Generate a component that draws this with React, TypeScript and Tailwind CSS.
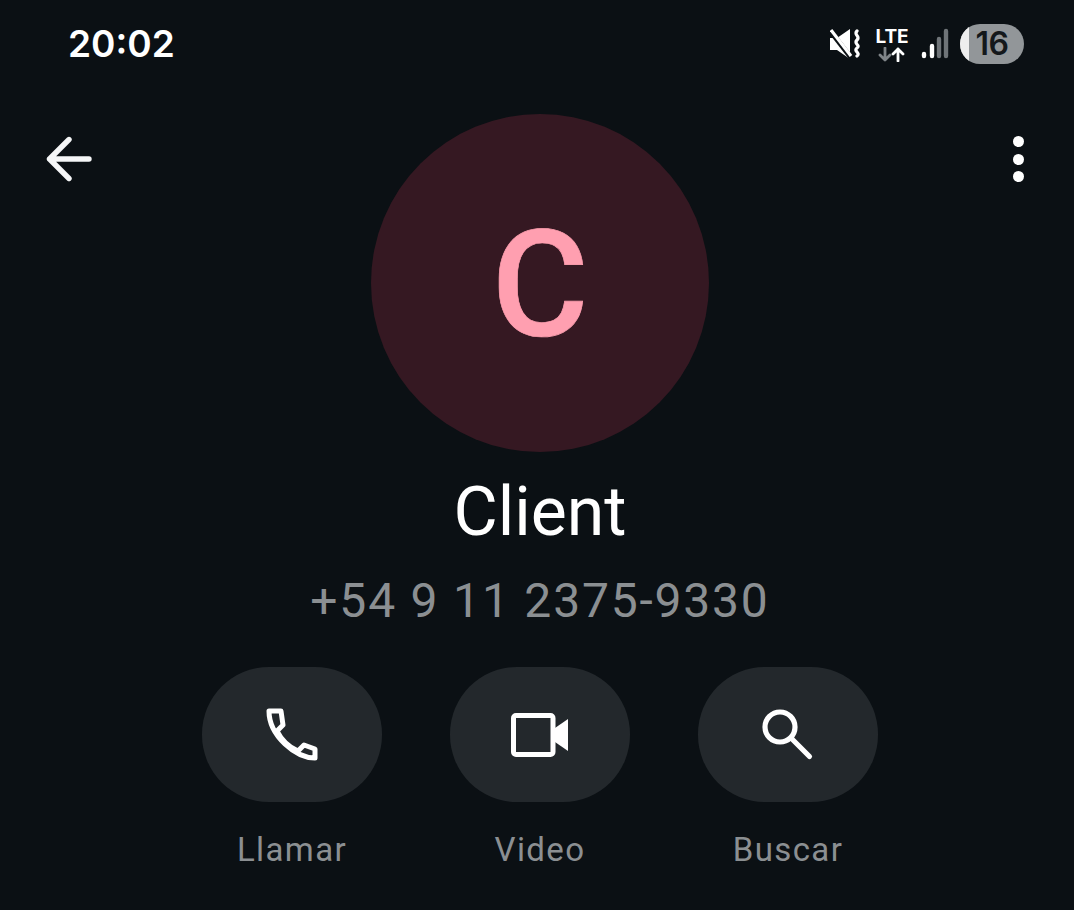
import React from "react";

function ActionButton({ label, children }: { label: string; children: React.ReactNode }) {
  return (
    <div className="flex w-[180px] flex-col items-center">
      <div className="flex h-[135px] w-[180px] items-center justify-center rounded-[67px] bg-[#23282c]">{children}</div>
      <div className="mt-[28px] h-[40px] text-[33px] leading-[40px] tracking-[1.4px] text-[#8b8f92]">{label}</div>
    </div>
  );
}

export default function App() {
  return (
    <div className="h-[910px] w-[1074px] overflow-hidden bg-[#0b1014] pl-[6px] font-['Roboto',sans-serif]">
      <div className="flex h-[88px] items-center justify-between pl-[62px] pr-[50px]">
        <span className="font-['Inter',sans-serif] text-[37px] font-semibold leading-[44px] text-white">20:02</span>
        <div className="flex items-center">
          <svg width="30" height="32" viewBox="0 0 30 32" className="mr-[14px]" fill="none">
            <path d="M0 10h7L20 1v30L7 22H0z" fill="#fff" />
            <path d="M-2 0l24 31" stroke="#0b1014" strokeWidth="5" />
            <path d="M1 2l20 26" stroke="#fff" strokeWidth="3.2" />
            <path d="M27 3c-4 4 4 5 0 9s4 5 0 8 4 5 0 8" stroke="#fff" strokeWidth="3.2" strokeLinecap="round" />
          </svg>
          <div className="mr-[11px] flex w-[36px] flex-col items-center">
            <span className="font-['Inter',sans-serif] text-[19px] font-bold leading-[20px] text-white">LTE</span>
            <svg width="28" height="15" viewBox="0 0 28 15" fill="none" strokeWidth="2.8" strokeLinecap="round" strokeLinejoin="round">
              <path d="M7 1v12M2 8l5 5 5-5" stroke="#7f8488" />
              <path d="M20 14V2M15 7l5-5 5 5" stroke="#fff" />
            </svg>
          </div>
          <svg width="28" height="32" viewBox="0 0 28 32" className="mr-[11px]" fill="none" strokeWidth="4.4" strokeLinecap="round">
            <path d="M3 26v2" stroke="#fff" />
            <path d="M11 18v10" stroke="#fff" />
            <path d="M18 11v17M25 3v25" stroke="#6f7478" />
          </svg>
          <div className="relative flex h-[40px] w-[64px] items-center justify-center overflow-hidden rounded-[20px] bg-[#929699]">
            <div className="absolute inset-y-0 left-0 w-[9px] bg-[#eeeeee]" />
            <span className="relative font-['Inter',sans-serif] text-[32px] font-semibold leading-[40px] tracking-[-0.5px] text-[#14181b]">16</span>
          </div>
        </div>
      </div>

      <div className="grid grid-cols-[1fr_338px_1fr] px-[40px] pt-[26px]">
        <svg width="46" height="46" viewBox="0 0 46 46" className="mt-[22px]" fill="none" stroke="#f5f6f7" strokeWidth="5.4" strokeLinecap="round" strokeLinejoin="round">
          <path d="M43 23H3.500M23 3.500L3.500 23l19.500 19.500" />
        </svg>
        <div className="flex h-[338px] w-[338px] items-center justify-center rounded-full bg-[#351822] pt-[6px]">
          <span className="text-[148px] font-medium leading-none text-[#ff9fb0] [-webkit-text-stroke:0.7px_#ff9fb0]">C</span>
        </div>
        <div className="mr-[10px] mt-[22px] flex h-[46px] w-[12px] flex-col items-center justify-between justify-self-end">
          <div className="h-[11px] w-[11px] rounded-full bg-white" />
          <div className="h-[11px] w-[11px] rounded-full bg-white" />
          <div className="h-[11px] w-[11px] rounded-full bg-white" />
        </div>
      </div>

      <div className="mt-[20px] text-center text-[68px] leading-[80px] text-white">Client</div>
      <div className="mt-[21px] text-center text-[48px] leading-[56px] tracking-[1.8px] text-[#8b8f92]">+54 9 11 2375-9330</div>

      <div className="mt-[38px] flex justify-center gap-[68px]">
        <ActionButton label="Llamar">
          <svg width="54" height="54" viewBox="0 0 54 54" fill="none" stroke="#fff" strokeWidth="5" strokeLinejoin="round" strokeLinecap="round">
            <path d="M4 3H16L18 17L12 23C17 33 24 39 33 43L39 37L50 41V50C31 50 4 28 4 3Z" />
          </svg>
        </ActionButton>
        <ActionButton label="Video">
          <svg width="58" height="44" viewBox="0 0 58 44" fill="none">
            <rect x="2.500" y="2.500" width="39.500" height="39" rx="2.500" stroke="#fff" strokeWidth="5" />
            <path d="M44 15l13-9v32l-13-9z" fill="#fff" />
          </svg>
        </ActionButton>
        <ActionButton label="Buscar">
          <svg width="52" height="52" viewBox="0 0 52 52" fill="none" stroke="#fff" strokeWidth="5.2" strokeLinecap="round">
            <circle cx="18" cy="18" r="15" />
            <path d="M30 30l17.500 17.500" />
          </svg>
        </ActionButton>
      </div>
    </div>
  );
}
